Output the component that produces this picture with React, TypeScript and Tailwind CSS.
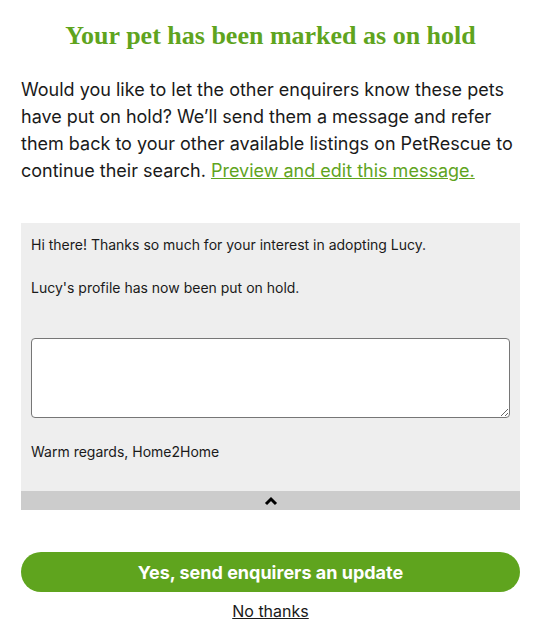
import React from "react";

export default function App() {
  return (
    <div className="w-[541px] min-h-[641px] bg-white px-[21px] pt-[18px]" style={{ fontFamily: "Inter, 'Liberation Sans', sans-serif" }}>
      <h1 className="text-center text-[26px] leading-[36px] font-bold text-[#5fa41e]" style={{ fontFamily: "'Liberation Serif', serif" }}>
        Your pet has been marked as on hold
      </h1>
      <p className="mt-[22px] text-[18px] leading-[27px] text-[#1a1a1a]">
        Would you like to let the other enquirers know these pets have put on hold? We’ll send them a message and refer them back to your other available listings on PetRescue to continue their search.{" "}
        <a href="#" className="text-[#5fa41e] underline">Preview and edit this message.</a>
      </p>
      <div className="mt-[39px] bg-[#eeeeee] flex flex-col">
        <div className="px-[10px] pt-[11px] pb-[29px] text-[14px] leading-[21px] text-[#1a1a1a]">
          <p>Hi there! Thanks so much for your interest in adopting Lucy.</p>
          <p className="mt-[22px]">Lucy's profile has now been put on hold.</p>
          <textarea className="mt-[40px] block w-full h-[80px] bg-white border border-[#767676] rounded-[4px]" />
          <p className="mt-[23px]">Warm regards, Home2Home</p>
        </div>
        <div className="h-[19px] bg-[#cccccc] flex items-center justify-center">
          <svg width="14" height="10" viewBox="0 0 14 10">
            <path d="M2 8 L7 3 L12 8" stroke="#000" strokeWidth="3" fill="none" />
          </svg>
        </div>
      </div>
      <button className="mt-[42px] w-full h-[40px] rounded-full bg-[#5fa41e] text-white text-[18px] font-bold">
        Yes, send enquirers an update
      </button>
      <div className="mt-[7px] text-center">
        <a href="#" className="text-[16px] leading-[22px] text-[#1a1a1a] underline">No thanks</a>
      </div>
    </div>
  );
}
